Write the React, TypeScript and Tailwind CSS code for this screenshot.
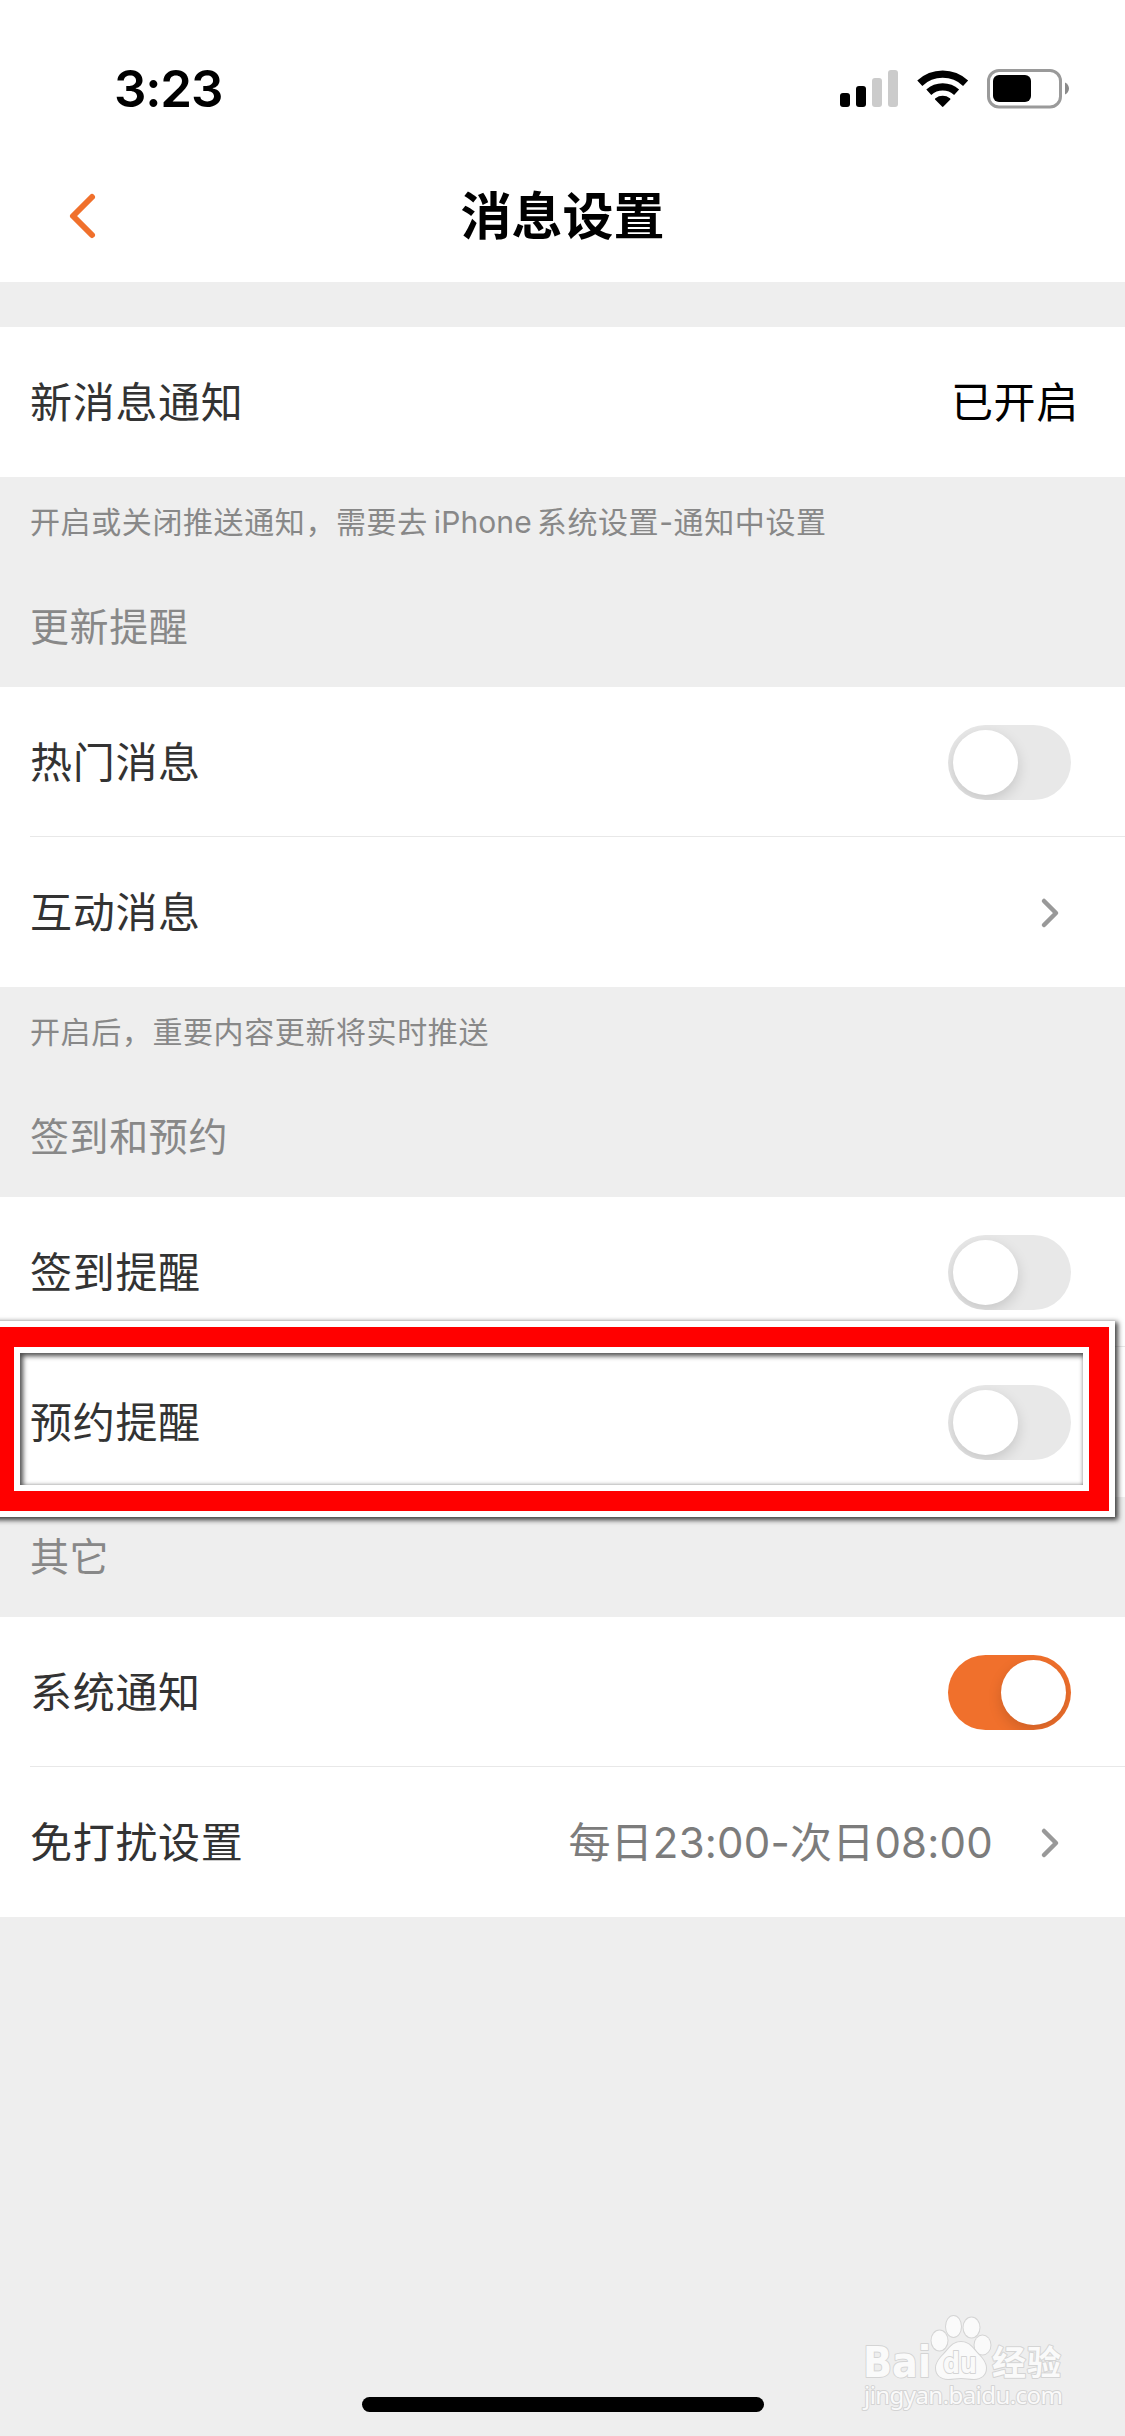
import { useState } from 'react'
import type { ReactNode } from 'react'

const ORANGE = '#f0702c'

/** Signal bars, wifi and battery on the right of the status bar. */
function StatusIcons() {
  return (
    <svg width="230" height="40" viewBox="840 69 230 40" className="block">
      <rect x="840" y="93" width="10" height="14" rx="3" fill="#000" />
      <rect x="856" y="86" width="10" height="21" rx="3" fill="#000" />
      <rect x="872" y="78" width="10" height="29" rx="3" fill="#cbcbcb" />
      <rect x="888" y="70" width="10" height="37" rx="3" fill="#cbcbcb" />
      <g fill="none" stroke="#000" strokeWidth="7.4">
        <path d="M919.8 83.2a33.5 33.5 0 0 1 45.8 0" />
        <path d="M928.8 92.3a20.6 20.6 0 0 1 27.8 0" />
      </g>
      <path d="M935.3 99.8c-.5-.5-.4-1.2.2-1.6a12 12 0 0 1 14.4 0c.6.4.7 1.1.2 1.6l-6.7 6.8c-.4.4-1 .4-1.4 0z" fill="#000" />
      <rect x="988.5" y="70.5" width="72" height="36.5" rx="10.5" fill="none" stroke="#9a9a9a" strokeWidth="3" />
      <rect x="993" y="75" width="38" height="27" rx="6" fill="#000" />
      <path d="M1065 82.5c2.5 1.2 4 3.4 4 6s-1.500 4.800-4 6z" fill="#8a8a8a" />
    </svg>
  )
}

function Chevron() {
  return (
    <svg width="20" height="32" viewBox="0 0 20 32" className="ml-[47px] mr-[65px] block shrink-0">
      <path d="M4 4l12 12L4 28" fill="none" stroke="#999" strokeWidth="4.500" strokeLinecap="round" strokeLinejoin="round" />
    </svg>
  )
}

function Toggle({ initial = false }: { initial?: boolean }) {
  const [on, setOn] = useState(initial)
  return (
    <button
      role="switch"
      aria-checked={on}
      onClick={() => setOn(!on)}
      className={
        'mr-[54px] flex h-[75px] w-[123px] shrink-0 items-center overflow-hidden rounded-full px-[5px] ' +
        (on ? 'justify-end bg-[#f0702c]' : 'justify-start bg-[#e8e8e8]')
      }
    >
      <span className="size-[65px] rounded-full bg-white shadow-[0_5px_14px_rgba(0,0,0,0.15)]" />
    </button>
  )
}

function Row({ label, divider, children }: { label: string; divider?: boolean; children: ReactNode }) {
  return (
    <div className="h-[150px] bg-white pl-[30px]">
      <div className={'flex h-full items-center justify-between border-b pt-[2px] ' + (divider ? 'border-[#e8e8e8]' : 'border-transparent')}>
        <span className="text-[42px] tracking-[0.7px] text-[#333]">{label}</span>
        {children}
      </div>
    </div>
  )
}

function Caption({ children }: { children: ReactNode }) {
  return <p className="flex h-[90px] items-center pl-[30px] text-[30px] tracking-[0.6px] text-[#888]">{children}</p>
}

function SectionTitle({ children }: { children: ReactNode }) {
  return <h2 className="flex h-[119px] items-center pl-[30px] mb-px text-[39px] tracking-[0.6px] text-[#888]">{children}</h2>
}

/** Red marker frame with a white edge on both sides. */
function Highlight() {
  return (
    <div className="pointer-events-none absolute -left-3 -top-[26px] z-10 h-[196px] w-[1127px] border-6 border-white shadow-[2px_2px_5px_1px_rgba(0,0,0,0.75)]">
      <div className="h-full border-20 border-[#ff0000]">
        <div className="h-full border-6 border-white">
          <div className="h-full shadow-[inset_2px_2px_5px_1px_rgba(0,0,0,0.7)]" />
        </div>
      </div>
    </div>
  )
}

function Watermark() {
  return (
    <svg width="212" height="110" viewBox="860 2310 212 110" className="absolute bottom-4 right-[53px]">
      <g fill="#fafafa" stroke="#d4d4d4" strokeWidth="2" paintOrder="stroke" strokeLinejoin="round">
        <text x="863" y="2377" fontSize="43" fontWeight="700" fontFamily="DejaVu Sans" textLength="68" lengthAdjust="spacingAndGlyphs">Bai</text>
        <ellipse cx="939.500" cy="2340.500" rx="8" ry="10" />
        <ellipse cx="953.500" cy="2326.500" rx="7.500" ry="10.500" />
        <ellipse cx="971.500" cy="2327.500" rx="8" ry="10" />
        <ellipse cx="982.500" cy="2345" rx="8" ry="9.500" />
        <path d="M961 2342c-9 0-12 7-17 12s-8 9-8 14c0 7 5 11 12 11 5 0 8-1 13-1s8 1 13 1c7 0 12-4 12-11 0-5-3-9-8-14s-8-12-17-12z" />
        <text x="943" y="2373" fontSize="28" fontWeight="700" fontFamily="DejaVu Sans" textLength="34" lengthAdjust="spacingAndGlyphs">du</text>
        <text x="992" y="2375" fontSize="34" fontWeight="700" fontFamily="Noto Sans CJK SC" textLength="69">经验</text>
        <text x="864" y="2404" fontSize="24" fontFamily="Noto Sans" textLength="199">jingyan.baidu.com</text>
      </g>
    </svg>
  )
}

export default function App() {
  return (
    <div className="relative flex h-[2436px] w-[1125px] flex-col overflow-hidden bg-[#eee] font-['Inter','Noto_Sans_CJK_SC',sans-serif] leading-none">
      <header className="h-[282px] shrink-0 bg-white">
        <div className="flex items-start justify-between pl-[114px] pr-[55px] pt-[69px]">
          <span className="text-[51px] font-semibold leading-[40px] tracking-[-1.2px]">3:23</span>
          <StatusIcons />
        </div>
        <div className="mt-[57px] grid h-[100px] grid-cols-3 items-center">
          <svg width="29" height="48" viewBox="0 0 29 48" className="ml-[68px] block">
            <path d="M24 5L5 24l19 19" fill="none" stroke={ORANGE} strokeWidth="6" strokeLinecap="round" strokeLinejoin="round" />
          </svg>
          <h1 className="pt-px text-center text-[51px] font-semibold text-black">消息设置</h1>
        </div>
      </header>

      <main className="pt-[45px]">
        <Row label="新消息通知">
          <span className="mr-[46px] text-[42px] tracking-[0.7px] text-black">已开启</span>
        </Row>
        <Caption>
          开启或关闭推送通知，需要去
          <span className="ml-[6px] mr-[5px] tracking-[0.1px]">iPhone</span>
          系统设置-通知中设置
        </Caption>

        <SectionTitle>更新提醒</SectionTitle>
        <Row label="热门消息" divider>
          <Toggle />
        </Row>
        <Row label="互动消息">
          <Chevron />
        </Row>
        <Caption>开启后，重要内容更新将实时推送</Caption>

        <SectionTitle>签到和预约</SectionTitle>
        <Row label="签到提醒" divider>
          <Toggle />
        </Row>
        <div className="relative">
          <Row label="预约提醒">
            <Toggle />
          </Row>
          <Highlight />
        </div>

        <SectionTitle>其它</SectionTitle>
        <Row label="系统通知" divider>
          <Toggle initial />
        </Row>
        <Row label="免打扰设置">
          <div className="flex items-center">
            <span className="text-[42px] tracking-[0.2px] text-[#7c7c7c]">每日23:00-次日08:00</span>
            <Chevron />
          </div>
        </Row>
      </main>

      <Watermark />
      <div className="mx-auto mb-6 mt-auto h-[15px] w-[402px] rounded-full bg-black" />
    </div>
  )
}
